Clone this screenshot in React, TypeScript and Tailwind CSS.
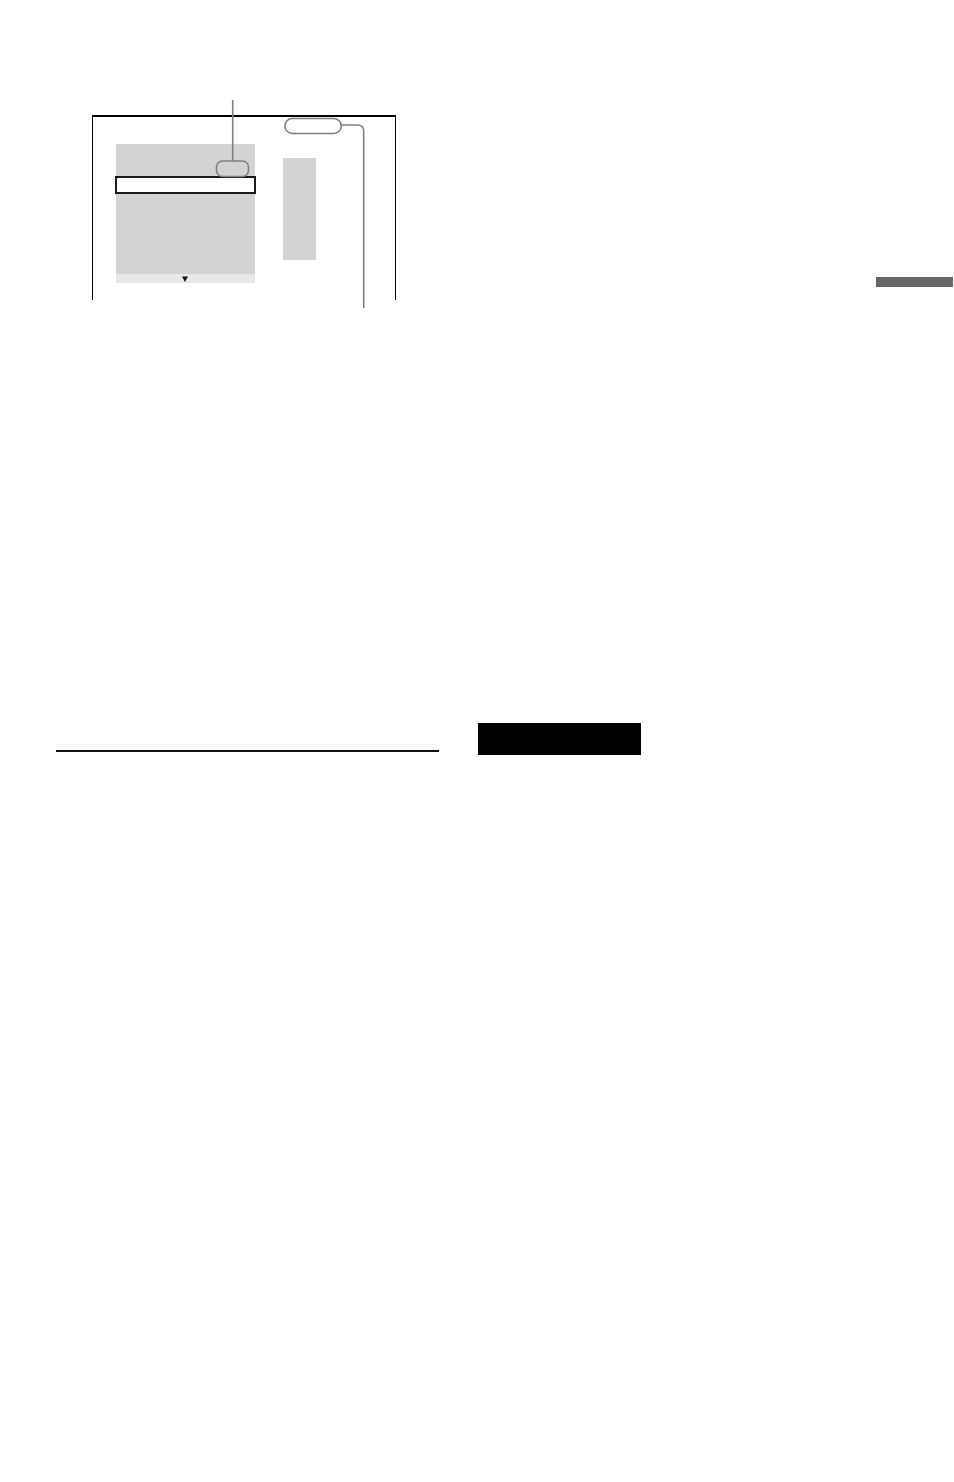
export default function App() {
  return (
    <div className="w-[954px] h-[1482px] bg-white pt-[100px] font-['Liberation_Sans',sans-serif]">
      {/* top row: menu display figure + chapter tab */}
      <div className="flex items-start">
        <div className="relative ml-[92px] w-[304px] h-[208px]">
          <div className="mt-[15px] h-[185px] border-t-2 border-x border-black flex items-start">
            <div className="ml-[23px] mt-[27px] w-[139px] flex flex-col">
              <div className="h-[130px] bg-[#d3d3d3] pt-[32px]">
                <div className="-mx-px h-[18px] bg-white border-2 border-[#1a1a1a]" />
              </div>
              <div className="h-[9px] bg-[#e8e8e8] flex items-center justify-center">
                <svg width="6" height="6" viewBox="0 0 6 6" className="-ml-[2px]">
                  <path d="M0 0.5H6L3 6Z" fill="#111" />
                </svg>
              </div>
            </div>
            <div className="ml-[28px] mt-[41px] w-[33px] h-[102px] bg-[#d3d3d3]" />
          </div>

          {/* callout lines */}
          <svg
            className="absolute inset-0"
            width="304"
            height="208"
            viewBox="92 100 304 208"
            fill="none"
            stroke="#808080"
            strokeWidth="1.6"
          >
            <path d="M232.7 100V161" />
            <rect x="216.5" y="161" width="32" height="15.5" rx="6" />
            <rect x="284.8" y="118.5" width="56.5" height="15" rx="7.5" />
            <path d="M341.3 125H357.5Q363.7 125 363.7 131.2V308" />
          </svg>
        </div>
        <div className="ml-auto mr-px mt-[177px] w-[77px] h-[10px] bg-[#666666]" />
      </div>

      {/* section rule + black heading bar */}
      <div className="flex items-start mt-[415px]">
        <div className="ml-[56px] mt-[27px] w-[383px] h-[2px] bg-[#111]" />
        <div className="ml-[39px] w-[163px] h-[32px] bg-black" />
      </div>
    </div>
  );
}
